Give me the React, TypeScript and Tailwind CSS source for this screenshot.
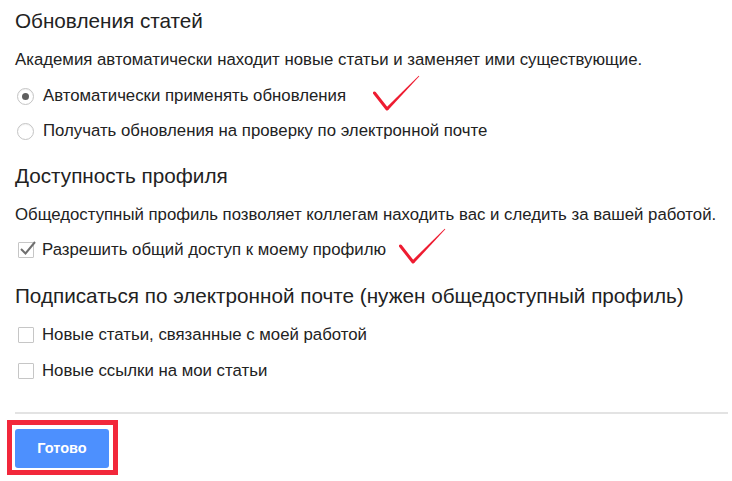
import React from "react";

const font = { fontFamily: '"Liberation Sans", Arial, sans-serif' };

function RedCheck() {
  return (
    <svg width="47" height="36" viewBox="0 0 47 36" className="shrink-0">
      <line x1="1.5" y1="18" x2="14" y2="34" stroke="#ee1c31" strokeWidth="3" strokeLinecap="round" />
      <polygon points="12.85,32.9 45.7,0.7 46.3,1.3 15.15,35.1" fill="#ee1c31" />
    </svg>
  );
}

function Radio({ checked }: { checked?: boolean }) {
  return (
    <span className="w-[17px] h-[17px] rounded-full border border-[#c4c4c4] bg-white flex items-center justify-center shrink-0 shadow-[inset_0_1px_1px_rgba(0,0,0,0.05)]">
      {checked && <span className="w-[7px] h-[7px] rounded-full bg-[#5f5f5f]" />}
    </span>
  );
}

function Checkbox({ checked }: { checked?: boolean }) {
  return (
    <span className="relative w-[16px] h-[16px] rounded-[1px] border border-[#c6c6c6] bg-white shrink-0">
      {checked && (
        <svg width="20" height="18" viewBox="0 0 20 18" className="absolute left-[-1px] top-[-4px]">
          <path d="M3 10 L7.5 14.5 L17 3" fill="none" stroke="#6f6f6f" strokeWidth="2" />
        </svg>
      )}
    </span>
  );
}

export default function App() {
  return (
    <div className="w-[732px] h-[481px] bg-white text-[#222] overflow-hidden" style={font}>
      <div className="flex flex-col pl-[15px] pr-[4px]">
        <div className="mt-[9px] h-[24px] flex items-center text-[20.7px] whitespace-nowrap">Обновления статей</div>
        <div className="mt-[17px] h-[20px] flex items-center text-[16.8px] whitespace-nowrap">
          Академия автоматически находит новые статьи и заменяет ими существующие.
        </div>
        <div className="mt-[14px] h-[24px] flex items-center text-[16.8px] whitespace-nowrap">
          <span className="ml-[2px] mr-[9px] flex"><Radio checked /></span>
          <span>Автоматически применять обновления</span>
          <span className="ml-[27px] mb-[6px] flex"><RedCheck /></span>
        </div>
        <div className="mt-[11px] h-[24px] flex items-center text-[16.8px] whitespace-nowrap">
          <span className="ml-[2px] mr-[9px] flex"><Radio /></span>
          <span>Получать обновления на проверку по электронной почте</span>
        </div>
        <div className="mt-[21px] h-[24px] flex items-center text-[20.7px] whitespace-nowrap">Доступность профиля</div>
        <div className="mt-[17px] h-[20px] flex items-center text-[16.8px] whitespace-nowrap">
          Общедоступный профиль позволяет коллегам находить вас и следить за вашей работой.
        </div>
        <div className="mt-[13px] h-[24px] flex items-center text-[16.8px] whitespace-nowrap">
          <span className="ml-[3px] mr-[8px] flex"><Checkbox checked /></span>
          <span>Разрешить общий доступ к моему профилю</span>
          <span className="ml-[13px] mb-[9px] flex"><RedCheck /></span>
        </div>
        <div className="mt-[22px] h-[24px] flex items-center text-[20.7px] whitespace-nowrap">
          Подписаться по электронной почте (нужен общедоступный профиль)
        </div>
        <div className="mt-[15px] h-[24px] flex items-center text-[16.8px] whitespace-nowrap">
          <span className="ml-[3px] mr-[8px] flex"><Checkbox /></span>
          <span>Новые статьи, связанные с моей работой</span>
        </div>
        <div className="mt-[12px] h-[24px] flex items-center text-[16.8px] whitespace-nowrap">
          <span className="ml-[3px] mr-[8px] flex"><Checkbox /></span>
          <span>Новые ссылки на мои статьи</span>
        </div>
        <div className="mt-[29px] h-[2px] bg-[#e3e3e3] w-[713px]" />
        <div className="mt-[6px] ml-[-8px] self-start border-[5px] border-[#f2283b] pt-[4px] pl-[3px] pr-[4px] pb-[2px]">
          <button className="w-[94px] h-[39px] rounded-[3px] bg-[#4d90fe] text-white text-[14.5px] font-bold flex items-center justify-center">
            Готово
          </button>
        </div>
      </div>
    </div>
  );
}
